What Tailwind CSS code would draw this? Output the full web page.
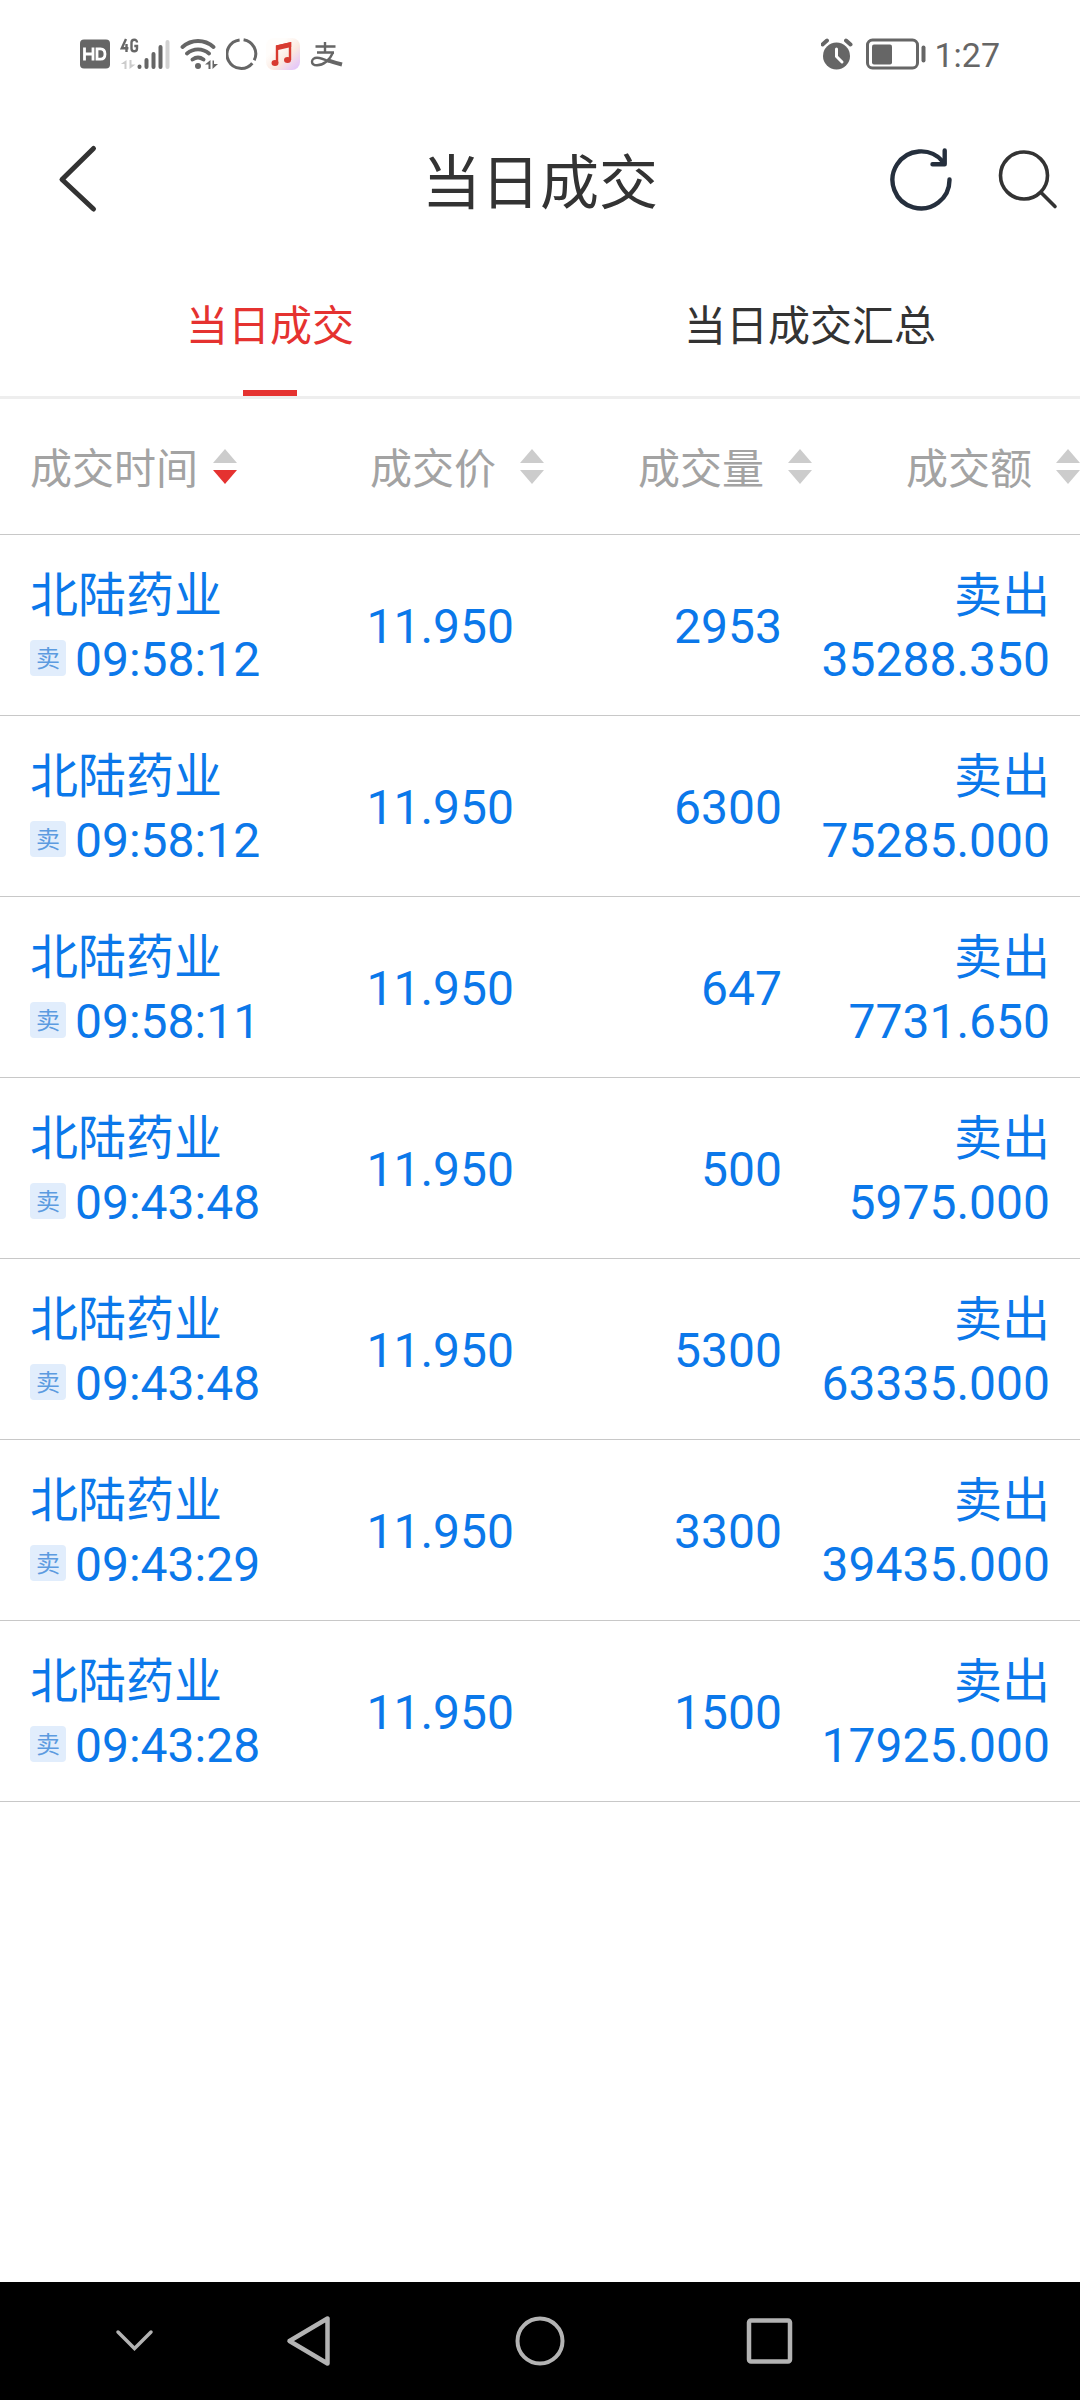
<!DOCTYPE html>
<html lang="zh-CN">
<head>
<meta charset="utf-8">
<meta name="viewport" content="width=device-width, initial-scale=1">
<title>当日成交</title>
<script src="https://cdn.jsdelivr.net/npm/@tailwindcss/browser@4"></script>
</head>
<body class="flex min-h-screen flex-col bg-white font-['Roboto','Noto_Sans_CJK_SC',sans-serif] text-[#333]">

<!-- System status bar -->
<div class="flex h-[108px] items-center justify-between px-20 text-[#666]">
  <div class="flex items-center gap-2">
    <svg class="h-8 w-8" viewBox="0 0 32 32" role="img" aria-label="HD">
      <rect x="0" y="1.500" width="30" height="29" rx="4" fill="#666"/>
      <path d="M4.500 9.500v13M13 9.500v13M4.500 16H13M17 10.800h3.500c3 0 4.500 2 4.500 5.200s-1.500 5.200-4.500 5.200H17z" fill="none" stroke="#fff" stroke-width="2.800"/>
    </svg>
    <svg class="h-8 w-[52px]" viewBox="0 0 52 32" role="img" aria-label="4G">
      <path d="M6 1 1.800 10.300h6.600M6.500 6v8M17 4.500C17 2.800 16 1.700 14.300 1.700S11.500 2.800 11.500 4.500v6c0 1.700 1 2.800 2.800 2.800S17 12.200 17 10.500V8h-2.700" fill="none" stroke="#666" stroke-width="2.400"/>
      <path d="M6.500 22v9H4.500v-5H.800zM9.500 31v-9h2v4.500h4z" fill="#ccc"/>
      <g stroke-width="4" stroke-linecap="round" stroke="#666">
        <path d="M19.500 28.500v.5M26.500 22v7M33.500 16v13M40.500 9v20"/>
        <path d="M47.500 4v25" stroke="#d2d2d2"/>
      </g>
    </svg>
    <svg class="h-8 w-[38px]" viewBox="0 0 38 32" role="img" aria-label="Wi-Fi">
      <g fill="none" stroke="#666" stroke-width="3.800" stroke-linecap="round">
        <path d="M2.500 9c9-8 22-8 31 0M7 15.500c6.500-5.500 15.500-5.500 22 0M12.500 21.500c3.500-2.600 7.500-2.600 11 0"/>
      </g>
      <circle cx="18" cy="28" r="3" fill="#666"/>
      <path d="M30.500 22v9h-2v-4.500h-3.500zM32.500 31v-8.500h1.500v3.500h4z" fill="#666"/>
    </svg>
    <svg class="h-8 w-8" viewBox="0 0 32 32" aria-hidden="true">
      <g fill="none" stroke="#666" stroke-width="3">
        <path d="M17.600 1.700A14.300 14.300 0 0 1 28.200 22.300"/>
        <path d="M26.300 25.200A14.300 14.300 0 1 1 13.600 1.900"/>
      </g>
    </svg>
    <svg class="h-8 w-[34px]" viewBox="0 0 34 32" aria-hidden="true">
      <defs><linearGradient id="note-bg" x1="0" y1="0" x2="1" y2="1"><stop offset=".3" stop-color="#fffdfb"/><stop offset=".6" stop-color="#fbe9e0"/><stop offset=".9" stop-color="#e6c8f8"/></linearGradient></defs>
      <rect x="0" y="0" width="34" height="32" rx="8" fill="url(#note-bg)"/>
      <path d="M11 25V8.500L24 5.500V22" fill="none" stroke="#d83a30" stroke-width="2.400"/>
      <path d="M10 7.500 25.200 4v5L10 12.500z" fill="#d83a30"/>
      <ellipse cx="9" cy="25" rx="3.500" ry="3" fill="#d83a30"/><ellipse cx="21.500" cy="22" rx="3.500" ry="3" fill="#d83a30"/>
    </svg>
    <svg class="h-8 w-9" viewBox="0 0 36 32" aria-hidden="true">
      <g fill="none" stroke="#666">
        <path d="M7.500 8.500h20M17 4v11M9 14.500h17" stroke-width="2.400"/>
        <path d="M25 14.500C22 22 15 27.300 9 27.300c-3.500 0-5-1.500-5-3.600 0-2.200 2-3.900 5-3.900 4 0 9 2.400 12 3.900" stroke-width="2.400"/>
        <path d="M20 22.300c4 1.400 9 2.900 14 4.200" stroke-width="4"/>
      </g>
    </svg>
  </div>
  <div class="flex items-center gap-2">
    <svg class="h-8 w-9" viewBox="0 0 36 32" role="img" aria-label="闹钟">
      <circle cx="15.500" cy="18" r="13.500" fill="#666"/>
      <path d="M1.500 6.500 6 2.500M29.500 6.500 25 2.500" stroke="#666" stroke-width="4" stroke-linecap="round"/>
      <path d="M15.500 11v7.500l5.500 5.500" fill="none" stroke="#fff" stroke-width="3" stroke-linecap="round"/>
    </svg>
    <svg class="h-8 w-[61px]" viewBox="0 0 61 32" role="img" aria-label="电量">
      <rect x="2.500" y="2" width="50" height="28" rx="5" fill="none" stroke="#666" stroke-width="3"/>
      <rect x="7" y="6.500" width="20" height="20" rx="2" fill="#666"/>
      <path d="M58.500 9.500v13" stroke="#666" stroke-width="4" stroke-linecap="round"/>
    </svg>
    <time class="pt-0.5 text-[34px] leading-10">1:27</time>
  </div>
</div>

<!-- Title bar -->
<header class="grid h-36 grid-cols-[1fr_auto_1fr] items-center">
  <div class="pl-12">
    <button type="button" class="block" aria-label="返回">
      <svg class="h-[72px] w-[60px]" viewBox="0 0 60 72" fill="none" stroke="#333" stroke-width="5" stroke-linecap="round" stroke-linejoin="round"><path d="M45.500 4.500 14 35.500l31.500 29.500"/></svg>
    </button>
  </div>
  <h1 class="pt-2 text-[59px] leading-[72px]">当日成交</h1>
  <div class="flex justify-end gap-7 pr-5">
    <button type="button" class="block" aria-label="刷新">
      <svg class="h-[72px] w-[72px]" viewBox="0 0 72 72" fill="none" stroke="#252f3d" stroke-width="4.400" stroke-linecap="round" stroke-linejoin="round">
        <path d="M61.500 35.500A28.500 28.500 0 1 1 54.500 17.200"/><path d="M56.700 6.500v13.700H44.500"/>
      </svg>
    </button>
    <button type="button" class="block" aria-label="搜索">
      <svg class="h-[72px] w-[72px]" viewBox="0 0 72 72" fill="none" stroke="#333" stroke-width="3.600" stroke-linecap="round">
        <circle cx="36" cy="31.500" r="23.500"/><path d="m53 48.500 14 14"/>
      </svg>
    </button>
  </div>
</header>

<!-- Tabs -->
<nav class="grid grid-cols-2 border-b-[3px] border-[#eee] text-[42px] leading-[60px]">
  <a href="#today" aria-current="page" class="flex h-36 flex-col items-center text-[#e53230]">
    <span class="flex-1 pt-[45px]">当日成交</span>
    <span class="h-1.5 w-[54px] bg-[#e53230]"></span>
  </a>
  <a href="#summary" class="flex h-36 flex-col items-center">
    <span class="flex-1 pt-[45px]">当日成交汇总</span>
  </a>
</nav>

<main class="flex-1">
  <table class="w-full table-fixed border-separate border-spacing-0">
    <colgroup><col class="w-[276px]"><col><col><col></colgroup>
    <thead class="text-[42px] leading-[60px] text-[#a3a3a3]">
      <tr id="head"></tr>
    </thead>
    <tbody id="rows" class="text-5xl leading-[64px] text-[#0b78ea]"></tbody>
  </table>
</main>

<!-- System navigation -->
<footer class="grid h-[118px] grid-cols-[73fr_122fr_229fr_231fr_229fr_196fr] items-center bg-black">
  <span></span>
  <button type="button" class="flex justify-center" aria-label="收起">
    <svg class="h-14 w-14" viewBox="0 0 56 56" fill="none" stroke="#b3b3b3" stroke-width="3.500" stroke-linecap="round"><path d="M12 19 28.500 35.500 45 19"/></svg>
  </button>
  <button type="button" class="flex justify-center" aria-label="后退">
    <svg class="h-14 w-14" viewBox="0 0 56 56" fill="none" stroke="#b3b3b3" stroke-width="4.500" stroke-linejoin="round"><path d="M45.500 5.500v45L7.500 28z"/></svg>
  </button>
  <button type="button" class="flex justify-center" aria-label="主屏幕">
    <svg class="h-14 w-14" viewBox="0 0 56 56" fill="none" stroke="#b3b3b3" stroke-width="4"><circle cx="28" cy="28" r="22.500"/></svg>
  </button>
  <button type="button" class="flex justify-center" aria-label="最近任务">
    <svg class="h-14 w-14" viewBox="0 0 56 56" fill="none" stroke="#b3b3b3" stroke-width="4.500"><rect x="7" y="7.500" width="41" height="41" rx="2"/></svg>
  </button>
</footer>

<script>
  const arrows = down => `<svg class="h-9 w-6 shrink-0" viewBox="0 0 24 36" aria-hidden="true"><path d="M12 0 24 14H0z" fill="#ccc"/><path d="M0 21h24L12 35z" fill="${down}"/></svg>`;
  const columns = ['成交时间', '成交价', '成交量', '成交额'];
  document.getElementById('head').innerHTML = columns.map((name, i) => i === 0
    ? `<th scope="col" aria-sort="descending" class="h-[136px] border-b border-[#c8c8c8] p-0 pl-[30px] font-normal"><button type="button" class="flex items-center gap-[15px]"><span class="pt-1.5">${name}</span>${arrows('#e53230')}</button></th>`
    : `<th scope="col" class="border-b border-[#c8c8c8] p-0 font-normal"><button type="button" class="ml-auto flex items-center gap-6"><span class="pt-1.5">${name}</span>${arrows('#ccc')}</button></th>`
  ).join('');

  const trades = [
    ['09:58:12', '11.950', '2953', '35288.350'],
    ['09:58:12', '11.950', '6300', '75285.000'],
    ['09:58:11', '11.950', '647', '7731.650'],
    ['09:43:48', '11.950', '500', '5975.000'],
    ['09:43:48', '11.950', '5300', '63335.000'],
    ['09:43:29', '11.950', '3300', '39435.000'],
    ['09:43:28', '11.950', '1500', '17925.000']
  ];
  document.getElementById('rows').innerHTML = trades.map(([time, price, volume, amount]) => `
    <tr>
      <td class="h-[181px] border-b border-[#c8c8c8] p-0 pt-1.5 pl-[30px] whitespace-nowrap">
        <div>北陆药业</div>
        <div class="flex items-center gap-[9px]"><span class="mb-1 flex h-9 w-9 items-center justify-center rounded-sm bg-[#e1edfc] pt-0.5 text-2xl text-[#5c9be0]">卖</span><time>${time}</time></div>
      </td>
      <td class="border-b border-[#c8c8c8] p-0 pt-1 pr-[30px] text-right">${price}</td>
      <td class="border-b border-[#c8c8c8] p-0 pt-1 pr-[30px] text-right">${volume}</td>
      <td class="border-b border-[#c8c8c8] p-0 pt-1.5 pr-[30px] text-right"><div>卖出</div><div>${amount}</div></td>
    </tr>`).join('');
</script>
</body>
</html>
